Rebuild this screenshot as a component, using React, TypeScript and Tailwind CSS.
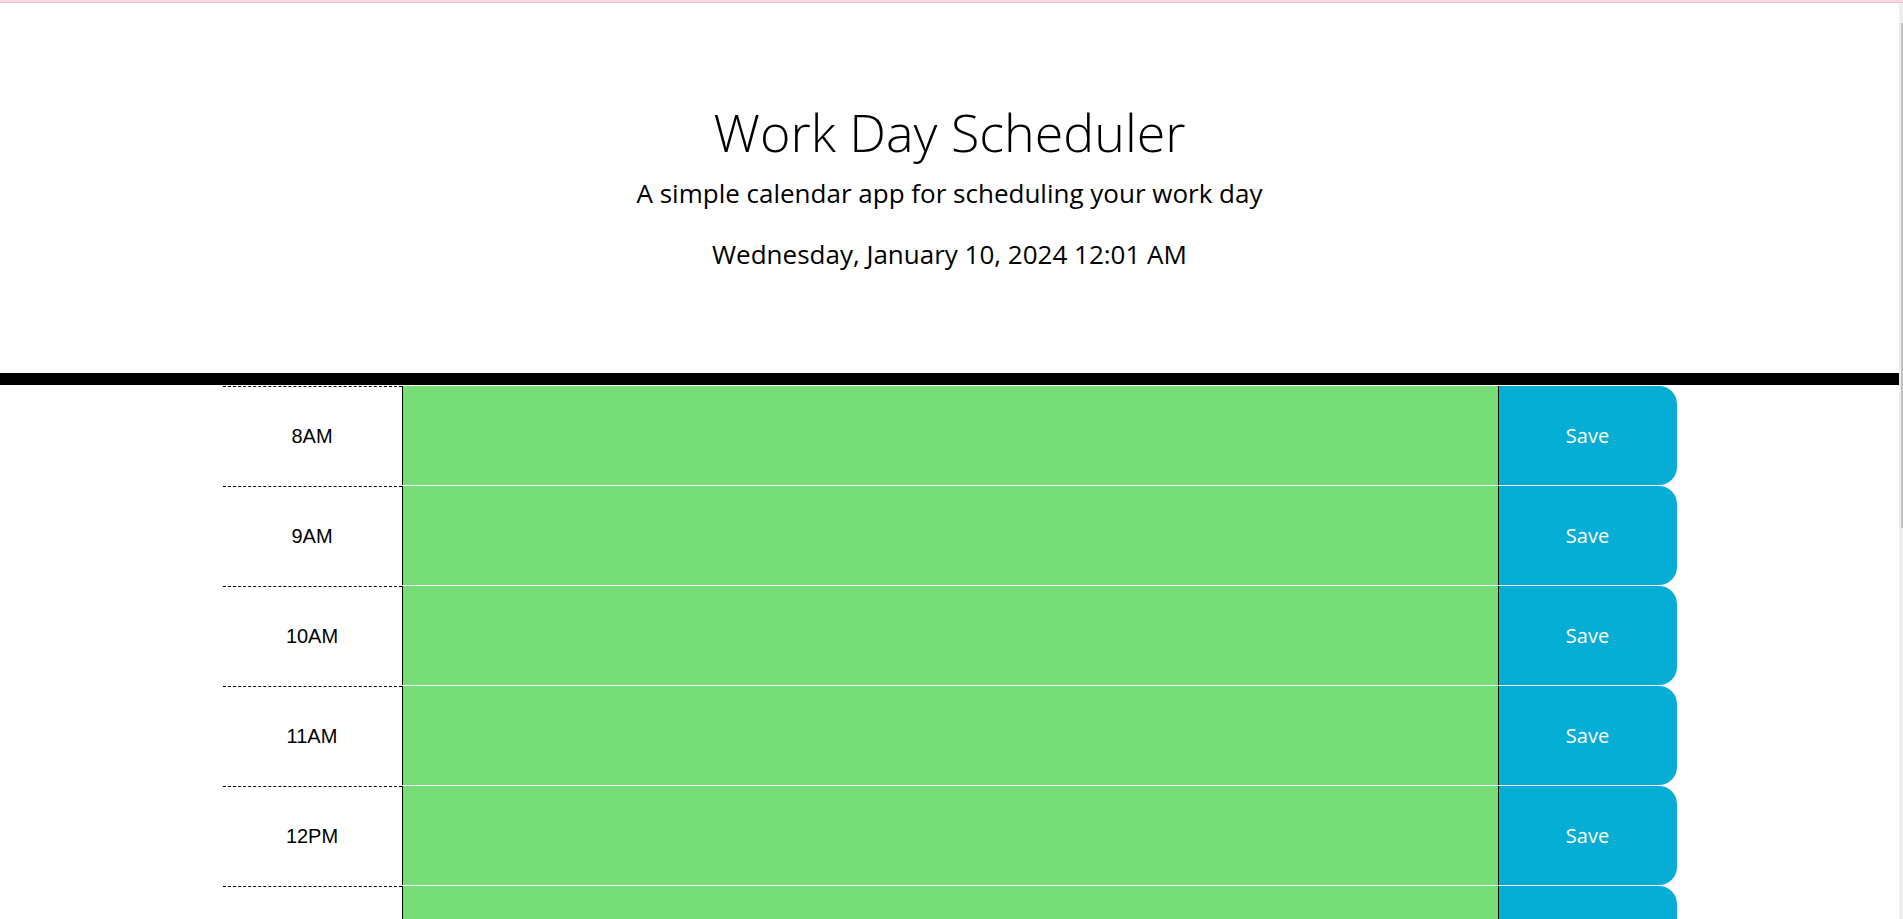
import React from 'react';

const hours = ['8AM', '9AM', '10AM', '11AM', '12PM', '1PM', '2PM', '3PM', '4PM', '5PM'];

function HourRow({ label }: { label: string }) {
  return (
    <div className="flex h-[100px] border-t border-white">
      <div className="w-[179px] shrink-0 border-t border-dashed border-black flex items-center justify-center font-['Liberation_Sans',Arial,sans-serif] text-[20px] text-black">
        {label}
      </div>
      <textarea className="w-[1096px] shrink-0 h-full resize-none bg-[#77dd77] border-l border-black p-[10px] text-black outline-none" />
      <button className="w-[179px] shrink-0 h-full bg-[#06aed5] border-l border-black rounded-r-[18px] text-white font-['Open_Sans',sans-serif] text-[20px]">
        Save
      </button>
    </div>
  );
}

function App() {
  return (
    <div className="h-screen overflow-hidden flex flex-col bg-white">
      <div className="h-[2px] bg-[#fcd7e0] shrink-0" />
      <div className="h-px bg-[#e8c2cb] shrink-0" />
      <div className="flex flex-1 min-h-0">
        <main className="flex-1 min-w-0 overflow-hidden">
          <header className="h-[382px] border-b-[12px] border-black text-center text-black font-['Open_Sans',sans-serif] pt-[99px]">
            <h1 className="text-[52px] leading-[60px] font-light">Work Day Scheduler</h1>
            <p className="mt-[13px] text-[26px] leading-[36px]">A simple calendar app for scheduling your work day</p>
            <p className="mt-[24px] text-[26px] leading-[38px]">Wednesday, January 10, 2024 12:01 AM</p>
          </header>
          <div className="w-[1454px] mx-auto">
            {hours.map((h) => (
              <HourRow key={h} label={h} />
            ))}
          </div>
        </main>
        {/* thin scrollbar like the screenshot */}
        <div className="w-[4px] shrink-0 bg-[#efefef] pt-[20px]">
          <div className="ml-[2px] w-[2px] h-[505px] bg-[#c2c2c2]" />
        </div>
      </div>
    </div>
  );
}

export default App;
